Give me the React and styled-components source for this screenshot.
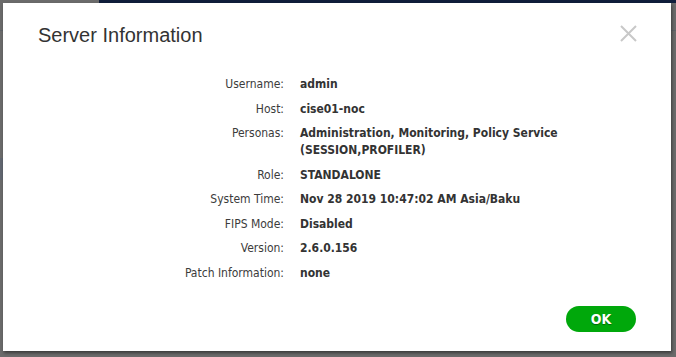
import React from "react";
import styled, { createGlobalStyle } from "styled-components";

const Global = createGlobalStyle`
  html, body { margin: 0; padding: 0; }
  body {
    width: 676px;
    height: 357px;
    overflow: hidden;
    background: #6b6b6b;
    font-family: "Liberation Sans", Arial, sans-serif;
  }
`;

const Backdrop = styled.div`
  position: relative;
  width: 676px;
  height: 357px;
  background:
    linear-gradient(to right, transparent 99px, #0f1d3b 99px) top / 100% 3px no-repeat,
    linear-gradient(#5f6368, #5f6368) 0 30px / 100% 1px no-repeat,
    linear-gradient(#626770, #626770) 0 158px / 3px 22px no-repeat,
    #6b6b6b;
  padding: 3px 0 0 3px;
  box-sizing: border-box;
`;

const Modal = styled.div`
  width: 668px;
  height: 348px;
  background: #fff;
  box-shadow: 1px 2px 3px rgba(0, 0, 0, 0.45);
  display: flex;
  flex-direction: column;
  position: relative;
`;

const Title = styled.h2`
  margin: 20px 0 0 35px;
  font-size: 20px;
  line-height: 24px;
  font-weight: normal;
  color: #333;
`;

const Close = styled.button`
  position: absolute;
  top: 19px;
  right: 32px;
  width: 22px;
  height: 22px;
  padding: 0;
  border: 0;
  background: none;
  display: flex;
  align-items: center;
  justify-content: center;
`;

const Info = styled.dl`
  margin: 29px 0 0 0;
  display: grid;
  grid-template-columns: 281px 1fr;
  column-gap: 16px;
  row-gap: 7.5px;
  font-family: "DejaVu Sans Condensed", "DejaVu Sans", sans-serif;
  font-size: 12px;
  line-height: 17px;
  color: #333;
`;

const Label = styled.dt`
  text-align: right;
  color: #3c3c3c;
`;

const Value = styled.dd`
  margin: 0;
  font-weight: bold;
  color: #333;
`;

const Footer = styled.div`
  margin-top: auto;
  padding: 0 35px 19px 0;
  display: flex;
  justify-content: flex-end;
`;

const OkButton = styled.button`
  width: 70px;
  height: 26px;
  border: 0;
  border-radius: 13px;
  background: #00a80b;
  color: #fff;
  font-family: "DejaVu Sans Condensed", "DejaVu Sans", sans-serif;
  font-weight: bold;
  font-size: 14px;
  text-shadow: 0 1px 1px rgba(0, 60, 0, 0.6);
  padding: 0;
`;

const rows = [
  ["Username:", "admin"],
  ["Host:", "cise01-noc"],
  ["Personas:", <>Administration, Monitoring, Policy Service<br />(SESSION,PROFILER)</>],
  ["Role:", "STANDALONE"],
  ["System Time:", "Nov 28 2019 10:47:02 AM Asia/Baku"],
  ["FIPS Mode:", "Disabled"],
  ["Version:", "2.6.0.156"],
  ["Patch Information:", "none"],
];

export default function App() {
  return (
    <>
      <Global />
      <Backdrop>
        <Modal>
          <Title>Server Information</Title>
          <Close aria-label="Close">
            <svg width="17" height="17" viewBox="0 0 17 17">
              <path d="M1 1L16 16M16 1L1 16" stroke="#c8c8c8" strokeWidth="2" fill="none" />
            </svg>
          </Close>
          <Info>
            {rows.map(([l, v]) => (
              <React.Fragment key={l}>
                <Label>{l}</Label>
                <Value>{v}</Value>
              </React.Fragment>
            ))}
          </Info>
          <Footer>
            <OkButton>OK</OkButton>
          </Footer>
        </Modal>
      </Backdrop>
    </>
  );
}
